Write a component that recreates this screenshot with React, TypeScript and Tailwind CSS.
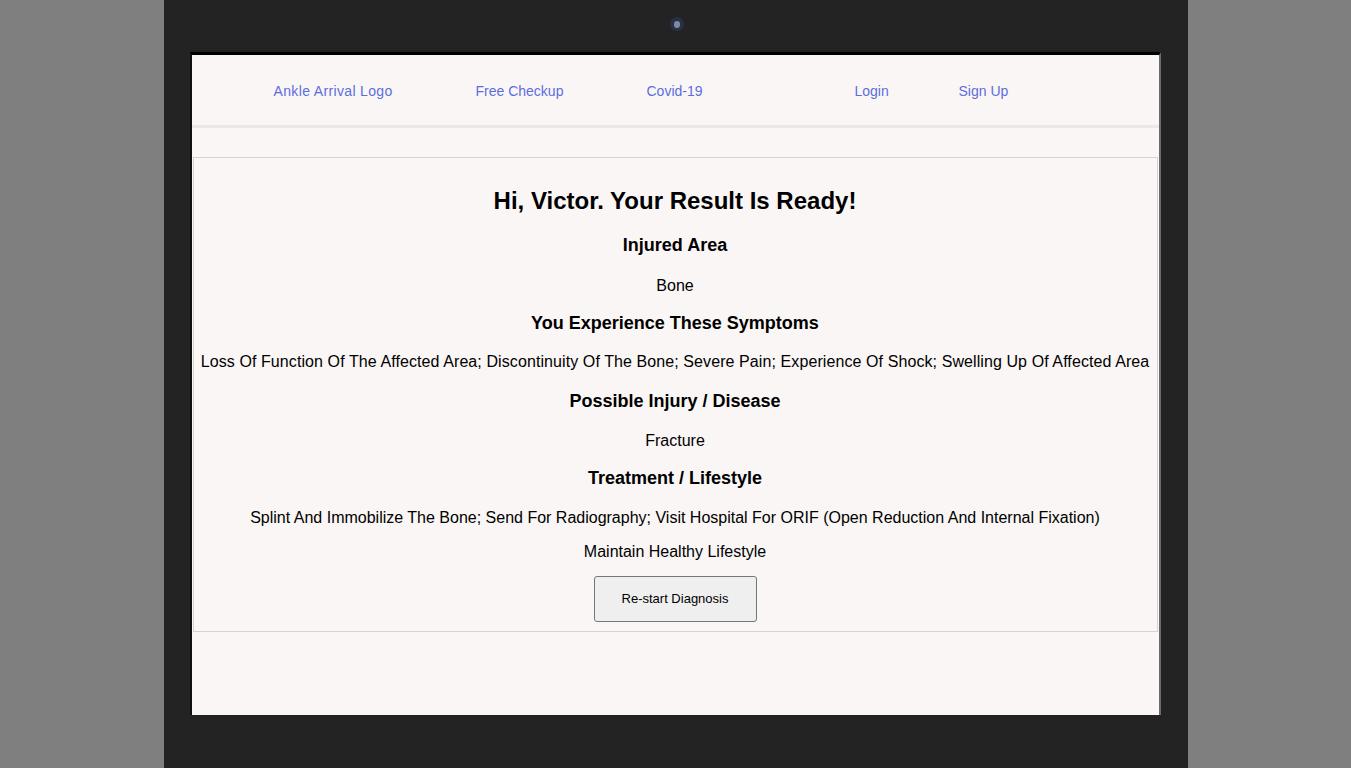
import React from "react";

const font = { fontFamily: '"Liberation Sans", Arial, sans-serif' };

export default function App() {
  return (
    <div className="w-[1351px] h-[768px] bg-[#7f7f7f] flex justify-center overflow-hidden">
      <div className="w-[1024px] h-[768px] bg-[#232323] flex flex-col items-center relative">
        <div className="absolute left-[506px] top-[17px] w-[14px] h-[14px] rounded-full bg-[#283044] flex items-center justify-center">
          <div className="w-[6px] h-[7px] rounded-full bg-[#7c8aa8]" />
        </div>
        <div className="mt-[52px] ml-[-1px] w-[971px] h-[663px] border-t-[3px] border-t-black border-l-[2px] border-l-[#111] border-r-[2px] border-r-[#6a6a70] bg-[#faf6f5] flex flex-col" style={font}>
          <nav className="h-[70px] shrink-0 flex items-center pt-[2px] pl-[82px] text-[14px] text-[#5a6ee0]">
            <a className="w-[202px] tracking-[0.35px]">Ankle Arrival Logo</a>
            <a className="w-[171px]">Free Checkup</a>
            <a className="w-[208px]">Covid-19</a>
            <a className="w-[104px]">Login</a>
            <a>Sign Up</a>
          </nav>
          <div className="h-[3px] bg-[#ebe7e6]" />
          <div className="mt-[29px] mx-[1px] border border-[#d6d2d1] flex flex-col items-center text-black pb-[9px]">
            <h1 className="mt-[25px] text-[24px] leading-[36px] font-bold">Hi, Victor. Your Result Is Ready!</h1>
            <h2 className="mt-[13px] text-[18px] leading-[27px] font-bold">Injured Area</h2>
            <p className="mt-[15px] text-[16px] leading-[24px]">Bone</p>
            <h2 className="mt-[12px] text-[18px] leading-[27px] font-bold">You Experience These Symptoms</h2>
            <p className="mt-[13px] text-[16px] leading-[24px] tracking-[0.09px]">Loss Of Function Of The Affected Area; Discontinuity Of The Bone; Severe Pain; Experience Of Shock; Swelling Up Of Affected Area</p>
            <h2 className="mt-[14px] text-[18px] leading-[27px] font-bold">Possible Injury / Disease</h2>
            <p className="mt-[14px] text-[16px] leading-[24px]">Fracture</p>
            <h2 className="mt-[12px] text-[18px] leading-[27px] font-bold">Treatment / Lifestyle</h2>
            <p className="mt-[14px] text-[16px] leading-[24px]">Splint And Immobilize The Bone; Send For Radiography; Visit Hospital For ORIF (Open Reduction And Internal Fixation)</p>
            <p className="mt-[10px] text-[16px] leading-[24px]">Maintain Healthy Lifestyle</p>
            <button className="mt-[12px] w-[163px] h-[46px] bg-[#efefef] border border-[#767676] rounded-[3px] text-[13px] text-black">Re-start Diagnosis</button>
          </div>
        </div>
      </div>
    </div>
  );
}
